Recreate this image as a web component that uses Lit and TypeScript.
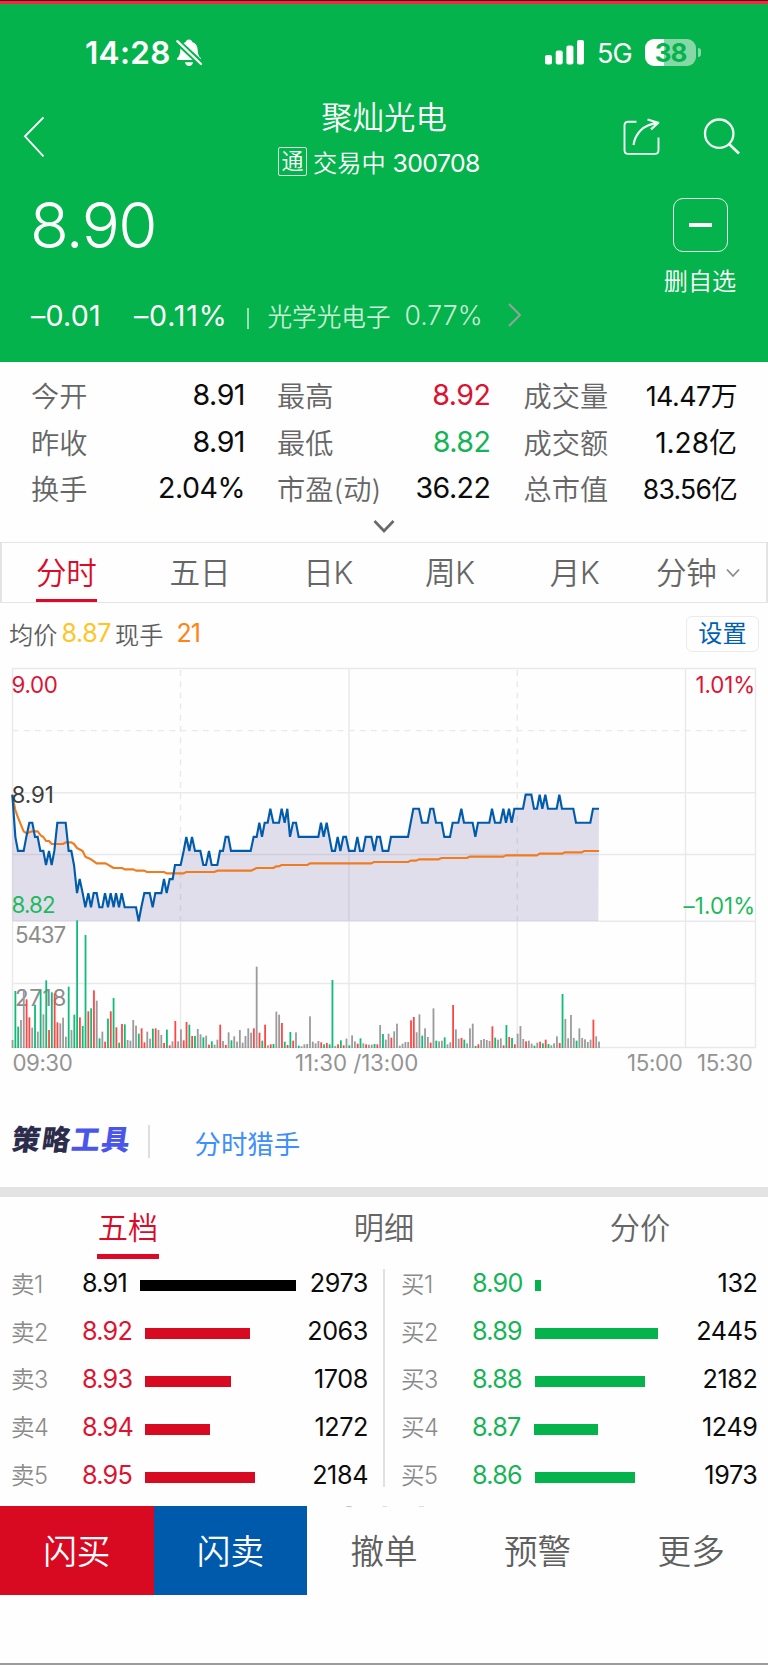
import { LitElement, html, css, svg } from "lit";
import { customElement } from "lit/decorators.js";

// Price trend: [x, level] where level 0 is 8.91 and every step is one cent lower.
const PRICE: number[][] = [
  [37, 0], [46, 3], [54, 4], [71, 4], [79, 3], [88, 2], [97, 2], [105, 3], [113, 3], [121, 4], [130, 4], [138, 5], [147, 4], [155, 5],
  [163, 4], [172, 2], [197, 2], [206, 4], [214, 4], [222, 5], [231, 7], [239, 6], [248, 7], [256, 8], [265, 7], [273, 8], [281, 7], [290, 7],
  [298, 8], [307, 8], [315, 7], [324, 8], [332, 7], [341, 8], [348, 7], [357, 8], [365, 7], [374, 8], [408, 8], [416, 9], [424, 8], [433, 7],
  [449, 7], [458, 8], [466, 7], [484, 7], [492, 6], [500, 7], [509, 6], [518, 6], [525, 5], [542, 5], [551, 4], [559, 3], [568, 4], [576, 3],
  [585, 4], [601, 4], [610, 5], [618, 5], [627, 4], [635, 5], [652, 5], [660, 4], [669, 4], [677, 3], [685, 3], [693, 4], [752, 4], [761, 3],
  [770, 3], [778, 2], [786, 3], [794, 2], [803, 2], [811, 1], [820, 2], [837, 2], [845, 1], [854, 2], [862, 1], [870, 3], [879, 2], [888, 2],
  [896, 3], [955, 3], [963, 2], [971, 3], [980, 2], [988, 3], [996, 4], [1005, 4], [1013, 3], [1021, 4], [1030, 3], [1038, 3], [1047, 4],
  [1064, 4], [1072, 3], [1080, 4], [1089, 4], [1097, 3], [1114, 3], [1123, 4], [1131, 3], [1140, 3], [1148, 4], [1165, 4], [1173, 3],
  [1224, 3], [1232, 2], [1240, 1], [1257, 1], [1266, 2], [1283, 2], [1291, 1], [1300, 1], [1308, 2], [1325, 2], [1333, 3], [1350, 3],
  [1358, 2], [1375, 2], [1384, 1], [1392, 2], [1418, 2], [1426, 3], [1434, 2], [1468, 2], [1476, 1], [1485, 2], [1501, 2], [1510, 1],
  [1518, 2], [1527, 1], [1535, 2], [1543, 1], [1569, 1], [1577, 0], [1594, 0], [1602, 1], [1611, 1], [1619, 0], [1627, 1], [1636, 0],
  [1644, 1], [1670, 1], [1678, 0], [1686, 1], [1720, 1], [1728, 2], [1771, 2], [1779, 1], [1797, 1],
];

const AVERAGE =
  "37,405 46,450 54,473 71,514 80,520 97,514 113,514 122,526 130,531 138,543 147,543 155,552 189,552 197,547 214,547 222,552 231,564 248,573 256,590 273,598 290,610 317,610 341,624 366,624 374,628 400,628 408,632 433,632 441,636 492,636 500,640 551,640 559,636 643,636 652,632 753,632 770,624 820,624 828,619 837,619 845,615 922,615 930,610 1114,610 1122,606 1224,606 1232,602 1249,602 1257,598 1316,598 1325,594 1400,594 1409,590 1510,590 1518,586 1611,586 1619,581 1686,581 1695,577 1745,577 1753,573 1797,573";

// One entry a minute: n = flat, r = up, g = down, followed by the bar height.
const VOLUME =
  "n24 g171 g64 n84 n176 r146 r92 n61 g130 n49 g176 n101 g203 r54 g167 r164 r77 n74 n91 n34 g184 n54 g100 g383 r92 g66 g339 r110 g119 r173 n142 g29 n49 r19 g88 r110 g150 r62 g16 r72 g71 n24 n22 n84 n67 g43 r59 r17 n49 n28 g58 r59 n54 n39 r15 g55 r8 n20 r81 n20 n56 r23 r78 g70 r36 g36 n57 n41 g32 n37 r10 g20 n10 n25 r70 n21 r9 n47 g23 n35 n19 n54 n16 n36 n59 n46 r59 n244 r46 g22 r70 n8 r11 g12 n109 n100 r75 g19 r9 g48 r22 n47 g7 n5 n11 n12 n95 n19 n14 n21 r17 g11 r15 g11 g204 n6 r11 g23 r8 n28 g8 n38 n20 r13 g29 n14 r11 n10 n10 g12 r11 n69 g42 n25 n43 r31 n50 n73 n7 n13 n18 n18 r83 r93 n47 n101 g37 n59 n33 r16 n119 g22 n20 n22 g32 n11 n17 r129 n56 n28 r30 g25 n14 n59 n73 g6 r11 n24 n27 n24 n21 r65 g31 n25 n29 r8 g69 r33 g30 r11 n43 n66 n27 r20 n22 n13 g7 n16 r19 g14 r25 g12 n8 n14 n35 r15 g162 n87 n29 n99 n30 g22 n59 n30 n26 n18 n25 r85 n35 n19";

const BAR_COLORS: Record<string, string> = { n: "#9b9b9b", r: "#ff4646", g: "#0fbd78" };

@customElement("trend-chart")
class TrendChart extends LitElement {
  static styles = css`
    :host { display: block; }
    svg { display: block; }
    text { font-family: Inter, "Liberation Sans", sans-serif; font-size: 22.3px; font-weight: 400; letter-spacing: -0.2px; }
  `;

  render() {
    const line = PRICE.map(([x, k]) => `${x},${404 + k * 42.2}`).join(" ");
    const solid = "#e9e9ec";
    return html`<svg width="768" height="420" viewBox="0 0 768 420">
      <g stroke=${solid} stroke-width="1.4" fill="none">
        <path d="M12.5 8.5H755.5V387.5H12.5Z M12.5 132.7H755.5 M12.5 194.5H755.5 M12.5 261.2H755.5 M12.5 323.5H755.5 M349 8.5V387.5 M685.5 8.5V387.5 M180.5 261V387.5 M517.3 261V387.5"/>
        <path stroke-dasharray="6 5.2" d="M12.5 70.6H750 M180.5 10V261 M517.3 10V261"/>
      </g>
      <g transform="scale(.33333)">
        <polygon points="37,783 ${line} 1795,783" fill="#3a2a86" fill-opacity=".15"/>
        <polyline points=${AVERAGE} fill="none" stroke="#f07c22" stroke-width="6.4" stroke-linejoin="round"/>
        <polyline points=${line} fill="none" stroke="#005bab" stroke-width="6.4" stroke-linejoin="miter"/>
      </g>
      <text x="11.5" y="32.8" fill="#dc1435" textLength="46">9.00</text>
      <text x="11.5" y="143.1" fill="#3c3c3c" textLength="42">8.91</text>
      <text x="11.5" y="253.3" fill="#1cba5c" textLength="44">8.82</text>
      <text x="695.5" y="32.8" fill="#dc1435" textLength="59.5">1.01%</text>
      <text x="683.5" y="253.5" fill="#1cba5c" textLength="71.5">–1.01%</text>
      <g fill="#8c8c8c">
        <text x="15" y="282.8" textLength="51">5437</text>
        <text x="15" y="345.8" textLength="51">2718</text>
      </g>
      <g transform="scale(.33333)">
        ${VOLUME.split(" ").map((v, i) => {
          const h = +v.slice(1);
          return svg`<rect x=${35 + i * 8.418} y=${1164 - h} width="5.4" height=${h} fill=${BAR_COLORS[v[0]]}/>`;
        })}
      </g>
      <g fill="#949494">
        <text x="12.5" y="411.4" textLength="60">09:30</text>
        <text x="295" y="411.4" textLength="123">11:30 /13:00</text>
        <text x="627" y="411.4" textLength="55.5">15:00</text>
        <text x="697" y="411.4" textLength="55.5">15:30</text>
      </g>
    </svg>`;
  }
}

const STATS = [
  ["今开", "8.91", "", "最高", "8.92", "up", "成交量", "14.47万", "mid"],
  ["昨收", "8.91", "", "最低", "8.82", "down", "成交额", "1.28亿", "wide"],
  ["换手", "2.04%", "", "市盈(动)", "36.22", "", "总市值", "83.56亿", "tight"],
];

type Order = [string, string, string, number, number];

const ASKS: Order[] = [
  ["卖1", "8.91", "2973", 140, 156],
  ["卖2", "8.92", "2063", 145, 105],
  ["卖3", "8.93", "1708", 145, 86],
  ["卖4", "8.94", "1272", 145, 65],
  ["卖5", "8.95", "2184", 145, 110],
];

const BIDS: Order[] = [
  ["买1", "8.90", "132", 535, 6],
  ["买2", "8.89", "2445", 535, 123],
  ["买3", "8.88", "2182", 535, 110],
  ["买4", "8.87", "1249", 534, 64],
  ["买5", "8.86", "1973", 535, 100],
];

@customElement("app-root")
class AppRoot extends LitElement {
  static styles = css`
    :host {
      display: block;
      width: 768px;
      height: 1665px;
      overflow: hidden;
      background: #fefefe;
      font-family: Inter, "Noto Sans CJK SC", sans-serif;
      font-weight: 350;
      color: #0c0c0c;
      white-space: nowrap;
    }
    * { box-sizing: border-box; }
    svg { display: block; flex: none; }
    .page { display: flex; flex-direction: column; height: 1665px; }
    .stripe { height: 4px; border-top: 1px solid #3a0c16; background: #ff2242; }
    .header { height: 357.5px; background: #04b34b; color: #fff; display: flex; flex-direction: column; }

    .status { height: 96px; padding: 0 67px 0 85px; display: flex; align-items: center; }
    .clock { font-size: 31.5px; font-weight: 600; letter-spacing: 0.3px; line-height: 40px; padding-top: 1px; }
    .bell { margin-left: 4px; }
    .signal { margin-left: auto; }
    .net { font-size: 27px; font-weight: 400; letter-spacing: -0.9px; margin: 2px 0 0 13px; width: 48px; }
    .battery { display: flex; align-items: center; gap: 2px; }
    .cell {
      width: 51px; height: 27px; border-radius: 9px; text-align: center;
      background: linear-gradient(90deg, #fff 38%, #86d9a7 38%);
      color: #04b34b; font-weight: 700; font-size: 26px; line-height: 27px; letter-spacing: -1px;
    }
    .cap { width: 3px; height: 9px; border-radius: 0 3px 3px 0; background: #86d9a7; }

    .nav { height: 86px; display: grid; grid-template-columns: 200px 1fr 200px; }
    .back { margin: 16px 0 0 23px; }
    .title { text-align: center; }
    .name { font-size: 31.4px; line-height: 34px; padding-top: 1px; }
    .code { display: flex; justify-content: center; align-items: center; gap: 6px; height: 30px; margin-top: 11px; padding-right: 10px; font-size: 24.2px; }
    .badge { width: 29px; height: 29px; border: 1.3px solid #d5f2e0; border-radius: 2px; line-height: 26px; font-size: 22px; }
    .digits { font-size: 24.8px; font-weight: 375; letter-spacing: -0.55px; }
    .actions { display: flex; gap: 39.5px; padding: 17px 0 0 54px; }

    .quote { height: 100px; display: flex; justify-content: space-between; padding: 0 32px 0 30px; }
    .price { font-size: 63.5px; font-weight: 340; letter-spacing: -1.6px; line-height: 78px; }
    .remove { display: flex; flex-direction: column; align-items: center; padding-top: 12px; width: 72px; font-size: 24.2px; line-height: 30px; }
    .minus { flex: none; width: 55px; height: 54px; border: 1.5px solid #e4f7eb; border-radius: 10px; margin-bottom: 15px; display: flex; align-items: center; justify-content: center; }
    .dash { width: 23px; height: 4px; background: #fff; }
    .change { height: 58px; padding-left: 31px; display: flex; align-items: center; font-size: 28.6px; letter-spacing: 0.2px; font-weight: 380; }
    .delta { width: 103px; }
    .pct { width: 112.5px; letter-spacing: 0.8px; }
    .sector { display: flex; align-items: center; color: #c9efd7; font-size: 24.6px; letter-spacing: 0; font-weight: 350; }
    .bar { width: 2px; height: 21px; background: #9bdfb5; margin: 6px 19px 0 0; }
    .rate { margin-left: 14px; font-size: 26.6px; letter-spacing: 0; width: 104px; margin-top: -1px; }

    .stats { height: 180.5px; padding: 9.5px 31px 0 31px; }
    .row { display: grid; grid-template-columns: 214px 32px 213.5px 33px 213.5px; height: 46.7px; align-items: center; }
    .pair { display: flex; justify-content: space-between; align-items: center; font-size: 28.6px; letter-spacing: -0.5px; font-weight: 375; }
    .label { color: #666; font-weight: 350; letter-spacing: 0; font-size: 28.2px; }
    .mid { font-size: 26.8px; }
    .wide { font-size: 28px; letter-spacing: 0; }
    .tight { font-size: 26.5px; letter-spacing: -0.7px; }
    .up { color: #dc1230; }
    .down { color: #16b456; }
    .more { display: flex; justify-content: center; padding-top: 7.5px; }

    .tabs { height: 61px; border: 1.5px solid #e4e4e6; border-width: 1.5px 2px; display: flex; padding-left: 34px; font-size: 30.6px; color: #666; }
    .tab { display: flex; align-items: center; line-height: 54px; letter-spacing: -0.3px; padding-top: 1px; }
    .tab.on { color: #dc0a28; border-bottom: 3px solid #dc0a28; height: 59px; padding-top: 4px; }
    .caret { margin-left: 9px; }

    .info { height: 57px; padding: 3px 9px 0 9px; display: flex; align-items: center; font-size: 24.2px; color: #5e5e5e; }
    .avg { color: #ffc524; font-size: 25px; font-weight: 400; letter-spacing: -0.4px; width: 53.6px; margin-left: 4px; }
    .lot { color: #ff8412; font-size: 25px; font-weight: 400; letter-spacing: -0.8px; margin-left: 13px; }
    .set { margin: 2px 0 0 auto; width: 73px; height: 36px; border: 1.5px solid #ebebed; border-radius: 6px; color: #005fb3; text-align: center; line-height: 33px; font-weight: 400; }

    .tools { height: 106.5px; padding: 14px 12px 0; display: flex; align-items: center; }
    .brand { font-size: 28.5px; font-weight: 900; transform: skewX(-8deg); color: #2c2d4c; line-height: 34px; width: 117px; letter-spacing: 1.3px; }
    .brand b { color: #4a55ea; font-weight: 900; }
    .split { width: 1.5px; height: 33px; background: #dedede; margin: 2px 45px 0 19px; }
    .hunter { font-size: 26.4px; font-weight: 400; color: #3f8ffc; padding-top: 4px; }
    .band { height: 10px; background: #e3e3e4; }

    .tabs2 { height: 66px; display: grid; grid-template-columns: repeat(3, 256px); justify-items: center; font-size: 30.2px; color: #666; }
    .tabs2 .tab { height: 62.5px; padding: 1px 1px 0; letter-spacing: 0; }
    .tabs2 .on { border-bottom: 5px solid #dc0a28; padding-top: 5px; }
    .book { height: 243.5px; display: grid; grid-template-columns: 383px 2px 1fr; }
    .line { background: #e0e0e0; margin: 6px 0 19px; }
    .side { padding-left: 11px; }
    .bids { padding-left: 16px; }
    .order { height: 47.8px; display: grid; grid-template-columns: 71px auto 1fr auto; align-items: center; padding-right: 15px; padding-bottom: 6px; font-size: 25.2px; letter-spacing: -0.75px; font-weight: 375; }
    .bids .order { padding-right: 10.5px; }
    .vol { letter-spacing: -0.4px; }
    .lvl { color: #8a8a8a; font-weight: 350; font-size: 23.5px; letter-spacing: -0.5px; margin-top: -1px; }
    .depth { height: 11px; margin-top: 5px; }
    .black { background: #000; }
    .red { background: #d70a22; }
    .green { background: #04b34b; }

    .actionsbar { position: relative; height: 88.5px; display: grid; grid-template-columns: repeat(5, 1fr); font-size: 33.6px; color: #5f5f5f; }
    .act { display: flex; align-items: center; justify-content: center; padding-bottom: 2px; }
    .buy { background: #d70a22; color: #fff; }
    .sell { background: #005aab; color: #fff; }
    .peek { position: absolute; left: 345px; top: 0; }
    .foot { margin-top: auto; height: 2px; background: #9c9c9c; }
  `;

  private order([lvl, price, vol, x, w]: Order, start: number, tone: string) {
    return html`<div class="order">
      <span class="lvl">${lvl}</span>
      <span class=${tone === "red" ? "up" : tone === "green" ? "down" : ""} style="width:${x - start - 71}px">${price}</span>
      <i class="depth ${tone}" style="width:${w}px"></i>
      <span class="vol">${vol}</span>
    </div>`;
  }

  render() {
    return html`<div class="page">
      <div class="stripe"></div>
      <header class="header">
        <div class="status">
          <span class="clock">14:28</span>
          <svg class="bell" width="28" height="30" viewBox="0 0 28 30">
            <path fill="#fff" d="M14 2.5c1.8 0 3 1 3.3 2.4 3.6 1.2 5.3 4.3 5.4 8 .1 4 1 6.2 3 8.2.6.7.4 1.9-.7 1.9H3c-1.1 0-1.3-1.2-.7-1.9 2-2 2.9-4.2 3-8.2.1-3.7 1.8-6.8 5.4-8C11 3.5 12.2 2.500 14 2.500Z"/>
            <path fill="#fff" d="M10 25.2h8c-.3 2.3-1.9 3.8-4 3.8s-3.7-1.5-4-3.8Z"/>
            <path stroke="#04b34b" stroke-width="6.2" d="M1 3.2L28 28.5"/>
            <path stroke="#fff" stroke-width="2.3" stroke-linecap="round" d="M2.3 4.2L26 27"/>
          </svg>
          <svg class="signal" width="39" height="25" viewBox="0 0 39 25" fill="#fff">
            <rect x="0" y="15" width="7" height="9.5" rx="2"/><rect x="10.7" y="10.5" width="7" height="14" rx="2"/>
            <rect x="21.4" y="5.5" width="7" height="19" rx="2"/><rect x="32" y="0" width="7" height="24.5" rx="2"/>
          </svg>
          <span class="net">5G</span>
          <span class="battery"><span class="cell">38</span><i class="cap"></i></span>
        </div>
        <div class="nav">
          <svg class="back" width="22" height="42" viewBox="0 0 22 42" fill="none" stroke="#fff" stroke-width="1.9"><path d="M20.5 1.3L2 20.3L20.5 40.3"/></svg>
          <div class="title">
            <div class="name">聚灿光电</div>
            <div class="code"><span class="badge">通</span><span>交易中 <span class="digits">300708</span></span></div>
          </div>
          <div class="actions">
            <svg width="40" height="40" viewBox="0 0 40 40" fill="none" stroke="#f2fbf5" stroke-width="1.9" stroke-linejoin="round">
              <path d="M14.5 4.8H6Q2.5 4.8 2.5 8.3V33Q2.5 36.9 6 36.9H33Q36.5 36.9 36.5 33V20.5"/>
              <path d="M11.5 28C13 17.5 20 7.6 36 5.9M25.5 2.5L36.3 5.7L29 12.4" stroke-width="2.2"/>
            </svg>
            <svg width="40" height="40" viewBox="0 0 40 40" fill="none" stroke="#f2fbf5" stroke-width="2.3"><circle cx="17.2" cy="16.7" r="14.2"/><path d="M27 27L37 36.5" stroke-width="2.7"/></svg>
          </div>
        </div>
        <div class="quote">
          <div class="price">8.90</div>
          <div class="remove"><div class="minus"><i class="dash"></i></div>删自选</div>
        </div>
        <div class="change">
          <span class="delta">–0.01</span><span class="pct">–0.11%</span>
          <span class="sector"><i class="bar"></i>光学光电子<span class="rate">0.77%</span>
            <svg width="14" height="24" viewBox="0 0 14 24" fill="none" stroke="#97a39a" stroke-width="2"><path d="M1 1L12 12L1 23"/></svg>
          </span>
        </div>
      </header>

      <section class="stats">
        ${STATS.map((s) => html`<div class="row">
          <div class="pair"><span class="label">${s[0]}</span><span>${s[1]}</span></div><i></i>
          <div class="pair"><span class="label">${s[3]}</span><span class=${s[5]}>${s[4]}</span></div><i></i>
          <div class="pair"><span class="label">${s[6]}</span><span class=${s[8]}>${s[7]}</span></div>
        </div>`)}
        <div class="more"><svg width="22" height="16" viewBox="0 0 22 16" fill="none" stroke="#6a6a6a" stroke-width="2.7"><path d="M1.5 2L11 12L20.5 2"/></svg></div>
      </section>

      <nav class="tabs">
        <span class="tab on" style="margin-right:73px">分时</span>
        <span class="tab" style="margin-right:73px">五日</span>
        <span class="tab" style="margin-right:72px">日K</span>
        <span class="tab" style="margin-right:75px">周K</span>
        <span class="tab" style="margin-right:56.5px">月K</span>
        <span class="tab">分钟<svg class="caret" width="14" height="10" viewBox="0 0 14 10" fill="none" stroke="#8a8a8a" stroke-width="1.8"><path d="M1 1.5L7 8L13 1.5"/></svg></span>
      </nav>

      <div class="info"><span>均价</span><span class="avg">8.87</span><span>现手</span><span class="lot">21</span><span class="set">设置</span></div>
      <trend-chart></trend-chart>

      <div class="tools"><span class="brand">策略<b>工具</b></span><i class="split"></i><span class="hunter">分时猎手</span></div>
      <div class="band"></div>

      <nav class="tabs2"><span class="tab on">五档</span><span class="tab">明细</span><span class="tab">分价</span></nav>
      <section class="book">
        <div class="side">${ASKS.map((o, i) => this.order(o, 11, i ? "red" : "black"))}</div>
        <i class="line"></i>
        <div class="side bids">${BIDS.map((o) => this.order(o, 401, "green"))}</div>
      </section>
      <div class="actionsbar">
        <span class="act buy">闪买</span><span class="act sell">闪卖</span><span class="act">撤单</span><span class="act">预警</span><span class="act">更多</span>
        <svg class="peek" width="80" height="2" viewBox="0 0 80 2" stroke="#c4c4c4" stroke-width="1.2"><path d="M1.5 .5H6.5"/><path d="M37.5 .5H42 M74 .5H79" stroke="#dedede"/></svg>
      </div>
      <div class="foot"></div>
    </div>`;
  }
}
